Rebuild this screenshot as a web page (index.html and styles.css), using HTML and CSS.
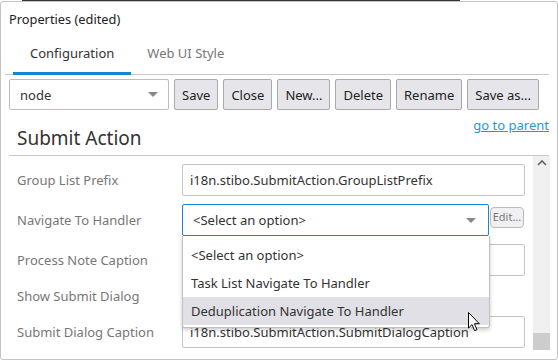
FILE: index.html
```html
<!DOCTYPE html>
<html lang="en">
<head>
    <meta charset="UTF-8">
    <title>Properties</title>
    <link rel="stylesheet" href="styles.css">
</head>
<body>

<div class="topbar"></div>

<div class="panel">
    <div class="title">Properties (edited)</div>

    <ul class="tabs">
        <li class="on">Configuration</li>
        <li>Web UI Style</li>
    </ul>

    <div class="toolbar">
        <div class="combo">
            <span>node</span>
            <i class="arrow"></i>
        </div>
        <button>Save</button>
        <button>Close</button>
        <button>New...</button>
        <button>Delete</button>
        <button>Rename</button>
        <button>Save as...</button>
    </div>

    <div class="head">
        <h2>Submit Action</h2>
        <a href="#">go to parent</a>
    </div>

    <div class="body">
        <div class="form">
            <div class="row">
                <label>Group List Prefix</label>
                <div class="field">i18n.stibo.SubmitAction.GroupListPrefix</div>
            </div>
            <div class="row">
                <label>Navigate To Handler</label>
                <div class="pick">
                    <div class="select">
                        <span>&lt;Select an option&gt;</span>
                        <i class="arrow"></i>
                    </div>
                    <!--下拉列表盖在后面几行上面-->
                    <ul class="drop">
                        <li>&lt;Select an option&gt;</li>
                        <li>Task List Navigate To Handler</li>
                        <li class="hover">Deduplication Navigate To Handler</li>
                    </ul>
                </div>
                <span class="edit">Edit...</span>
            </div>
            <div class="row">
                <label>Process Note Caption</label>
                <div class="field"></div>
            </div>
            <div class="row short">
                <label>Show Submit Dialog</label>
            </div>
            <div class="row">
                <label>Submit Dialog Caption</label>
                <div class="field">i18n.stibo.SubmitAction.SubmitDialogCaption</div>
            </div>
        </div>

        <div class="scroll">
            <svg class="up" width="10" height="6" viewBox="0 0 10 6">
                <path d="M1 5 L5 1 L9 5" fill="none" stroke="#606060" stroke-width="1.6"/>
            </svg>
            <div class="thumb"></div>
        </div>
    </div>

    <svg class="cursor" width="13" height="20" viewBox="0 0 13 20">
        <path d="M0.5 0.5 L0.5 16 L4 12.6 L6.6 18.6 L9 17.6 L6.4 11.7 L11.3 11.7 Z" fill="#fff" stroke="#000" stroke-width="1"/>
    </svg>
</div>

</body>
</html>
```

FILE: styles.css
```css
* {
    margin: 0;
    padding: 0;
    box-sizing: border-box;
}

ul, li {
    list-style: none;
}

a {
    text-decoration: none;
}

body {
    font-family: "Noto Sans", "Open Sans", sans-serif;
    font-size: 13px;
    color: #333;
    background: #fff;
    width: 558px;
    height: 361px;
    overflow: hidden;
}

.topbar {
    margin-left: 22px;
    width: 438px;
    height: 1px;
    background: #333;
}

.panel {
    position: relative;
    height: 359px;
    border: 1px solid #c4c4c4;
    border-radius: 3px;
}

.title {
    padding: 8px 0 0 8px;
    height: 33px;
    font-size: 12.8px;
    color: #222;
}

.tabs {
    display: flex;
    margin: 0 8px 0 4px;
    height: 40px;
    border-bottom: 1px solid #c8c8c8;
}
.tabs li {
    padding: 9px 16px 0;
    height: 40px;
    color: #777;
}
.tabs li:first-child {
    margin-left: 8px;
    padding: 9px 17px 0;
}
.tabs li.on {
    color: #333;
    border-bottom: 3px solid #1288cf;
    margin-bottom: -1px;
}

.toolbar {
    display: flex;
    gap: 5px;
    margin: 4px 0 0 8px;
    height: 31px;
}
.combo {
    display: flex;
    align-items: center;
    justify-content: space-between;
    width: 160px;
    padding: 0 10px;
    border: 1px solid #bdbdbd;
    border-radius: 2px;
}
.arrow {
    width: 0;
    height: 0;
    border-left: 5px solid transparent;
    border-right: 5px solid transparent;
    border-top: 5px solid #888;
}
.toolbar button {
    font: inherit;
    color: #222;
    padding: 0 7px;
    white-space: nowrap;
    background: #e6e6ea;
    border: 1px solid #a8a8ad;
    border-radius: 2px;
}

.head {
    display: flex;
    justify-content: space-between;
    align-items: flex-start;
    margin: 5px 8px 0 8px;
    height: 41px;
    border-bottom: 1px solid #c8c8c8;
}
.head h2 {
    font-weight: normal;
    font-size: 19px;
    color: #333;
    padding: 10px 0 0 8px;
}
.head a {
    color: #1a9ad6;
    text-decoration: underline;
    padding-top: 1px;
}

.body {
    display: flex;
    margin: 0 7px 0 8px;
    height: 197px;
}
.form {
    flex: 1;
    padding: 8px 8px 0 8px;
}
.row {
    display: flex;
    align-items: center;
    height: 32px;
    margin-bottom: 8px;
}
.row.short {
    height: 24px;
}
.row label {
    width: 165px;
    color: #777;
}
.field {
    flex: 1;
    height: 32px;
    padding: 6px 7px;
    border: 1px solid #c4c4c4;
    border-radius: 2px;
    white-space: nowrap;
    overflow: hidden;
}
.pick {
    position: relative;
    width: 307px;
    flex-shrink: 0;
}
.select {
    display: flex;
    align-items: center;
    justify-content: space-between;
    height: 32px;
    padding: 0 12px 0 10px;
    border: 1px solid #1987cc;
    border-radius: 2px;
}
.edit {
    align-self: flex-start;
    margin: 3px 0 0 1px;
    height: 21px;
    width: 34px;
    line-height: 18px;
    font-size: 11px;
    text-align: center;
    white-space: nowrap;
    overflow: hidden;
    color: #777;
    background: #f0f0f2;
    border: 1px solid #bbb;
    border-radius: 4px;
}
.drop {
    position: absolute;
    top: 32px;
    left: 0;
    width: 308px;
    padding: 5px 0 2px;
    background: #fff;
    border: 1px solid #c0c0c0;
    border-top: none;
    border-radius: 0 0 3px 3px;
    box-shadow: 0 2px 4px rgba(0, 0, 0, .2);
    z-index: 2;
}
.drop li {
    height: 28px;
    line-height: 28px;
    padding-left: 8px;
}
.drop li.hover {
    background: #e0e0e6;
}

.scroll {
    position: relative;
    width: 17px;
    margin-bottom: 3px;
    background: #f0f0f0;
}
.scroll .up {
    display: block;
    margin: 4px auto 0;
}
.scroll .thumb {
    position: absolute;
    left: 0;
    bottom: 0;
    width: 17px;
    height: 17px;
    background: #cdcdcd;
}

.cursor {
    position: absolute;
    left: 467px;
    top: 310px;
    z-index: 3;
}
```
